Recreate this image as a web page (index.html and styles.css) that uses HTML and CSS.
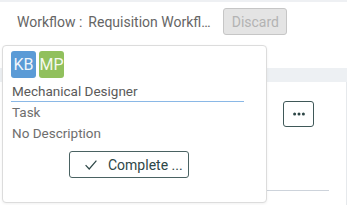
FILE: index.html
```html
<!DOCTYPE html>
<html>
<head>
<meta charset="utf-8">
<link rel="stylesheet" href="styles.css">
</head>
<body>
<div class="page">
  <div class="topbar"></div>
  <div class="header">
    <span class="label">Workflow :</span>
    <span class="name">Requisition Workfl…</span>
    <button class="discard">Discard</button>
  </div>
  <div class="panel">
    <div class="band"></div>
    <div class="body">
      <div class="row">
        <button class="more" aria-label="More">
          <svg width="12" height="4" viewBox="0 0 12 4"><circle cx="1.6" cy="2" r="1.5"/><circle cx="6" cy="2" r="1.5"/><circle cx="10.4" cy="2" r="1.5"/></svg>
        </button>
      </div>
      <div class="divider"></div>
      <div class="foot">Comments</div>
    </div>
  </div>

  <div class="card">
    <div class="badges">
      <span class="badge kb">KB</span>
      <span class="badge mp">MP</span>
    </div>
    <div class="title">Mechanical Designer</div>
    <div class="meta">Task</div>
    <div class="meta">No Description</div>
    <button class="complete"><svg class="check" width="12" height="10" viewBox="0 0 12 10"><polyline points="0.6,5.2 4.2,9 11.4,0.6"/></svg>Complete ...</button>
  </div>
</div>
</body>
</html>
```
FILE: styles.css
```css
* { box-sizing: border-box; }
html, body { margin: 0; padding: 0; background: #fff; }
body { font-family: Roboto, "Liberation Sans", sans-serif; color: #555; overflow: hidden; width: 347px; height: 205px; }
.page { position: relative; width: 347px; height: 205px; overflow: hidden; }
.topbar { height: 2px; background: #eef0f3; }
.header { height: 39px; display: flex; align-items: center; padding-left: 17px; font-size: 14px; line-height: 20px; color: #656565; }
.label { margin-right: 6px; }
.name { width: 119px; flex: none; white-space: nowrap; }
.discard { margin-left: 16px; width: 64px; height: 27px; border: 1px solid #c6c6c6; border-radius: 3px; background: #e4e4e4; color: #b3b3b3; font: 14px Roboto, sans-serif; padding: 0; }
.panel { margin-top: 27px; }
.band { height: 14px; background: #edf0f3; }
.body { border-right: 1px solid #e6e9ec; height: 123px; }
.row { display: flex; justify-content: flex-end; padding-top: 19px; padding-right: 32px; height: 108px; }
.more { width: 31px; height: 26px; border: 1px solid #3f5858; border-radius: 3px; background: #fff; padding: 0; display: flex; align-items: center; justify-content: center; }
.more svg { fill: #2c4545; }
.divider { height: 1px; background: #cdd3db; margin-right: 17px; margin-left: 8px; }
.foot { margin-top: 10px; padding-left: 6px; font-size: 14px; color: #888; line-height: 20px; }
.card { position: absolute; left: 2px; top: 45px; width: 265px; height: 158px; background: #fff; border: 1px solid #dcdcdc; border-radius: 4px; padding: 5px 8px 0 8px; box-shadow: 0 1px 3px rgba(0,0,0,0.06); }
.badges { display: flex; gap: 3px; }
.badge { width: 25px; height: 27px; border-radius: 3px; color: rgba(255,255,255,0.92); font-size: 16px; line-height: 27px; text-align: center; }
.kb { background: #5b9bd6; }
.mp { background: #91c05d; }
.title { margin-top: 4px; width: 233px; line-height: 19px; font-size: 13.5px; color: #5a5a5a; border-bottom: 1px solid #8ab8e6; padding-left: 1px; }
.meta { font-size: 13.5px; line-height: 21px; color: #6e6e6e; padding-left: 1px; }
.meta:first-of-type { margin-top: 4px; }
.complete { display: flex; align-items: center; margin: 7px 0 0 58px; width: 120px; height: 27px; border: 1px solid #4a6262; border-radius: 3px; background: #fff; color: #2e4747; font: 14px Roboto, sans-serif; padding: 0 0 0 15px; }
.check { margin-right: 11px; fill: none; stroke: #2e4747; stroke-width: 1.2; }
```
